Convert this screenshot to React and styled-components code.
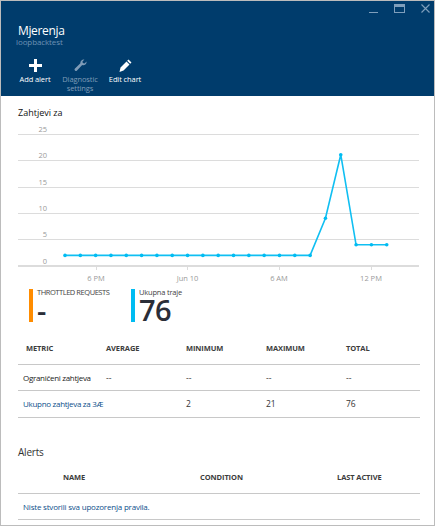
import React from "react";
import styled, { createGlobalStyle } from "styled-components";

const Global = createGlobalStyle`
  html, body { margin: 0; padding: 0; background: #fff; }
  body { font-family: "Open Sans", "Noto Sans", sans-serif; }
`;
const Frame = styled.div`
  box-sizing: border-box; width: 435px; height: 526px; overflow: hidden;
  border: 1px solid #bcbcbc; display: flex; flex-direction: column; background: #fff;
`;
const Header = styled.header`
  height: 95px; background: #003c6c; color: #fff; position: relative; flex: none;
  padding: 23px 0 0 17px; box-sizing: border-box;
`;
const Title = styled.h1`
  margin: 0; font-size: 12px; line-height: 13px; font-weight: 400; letter-spacing: -0.35px;
`;
const Subtitle = styled.div`
  font-size: 8px; line-height: 9px; color: #6d92b4; margin-left: -2px; letter-spacing: -0.1px;
`;
const Commands = styled.div` display: flex; margin-top: 13px; margin-left: -5.5px; `;
const Command = styled.div`
  width: 45px; display: flex; flex-direction: column; align-items: center;
  font-size: 7.5px; line-height: 9px; text-align: center; letter-spacing: -0.1px;
  color: ${p => (p.$off ? "#7f9cb8" : "#fff")};
  svg { display: block; margin-bottom: 3px; }
`;
const WindowButtons = styled.div`
  position: absolute; top: 3px; right: 4px; display: flex; gap: 16px; align-items: flex-start;
`;
const Body = styled.main` flex: 1; padding: 10px 15px 0 17px; `;
const ChartTitle = styled.h2`
  margin: 0; font-size: 9px; line-height: 13px; font-weight: 400; color: #111;
`;
const ChartSvg = styled.svg` display: block; margin-top: 6px; `;
const Legend = styled.div` display: flex; margin: 1px 0 0 11px; `;
const LegendItem = styled.div`
  width: 102px; height: 33px; box-sizing: border-box; border-left: 4px solid ${p => p.$c};
  padding-left: 4px;
`;
const LegendLabel = styled.div`
  font-size: 7.5px; line-height: 9px; margin-top: -1px; color: #444; white-space: nowrap;
  letter-spacing: ${p => (p.$tight ? "-0.45px" : "-0.2px")};
`;
const LegendValue = styled.div`
  font-size: 29px; line-height: 25px; font-weight: 600; color: #2b2e38; letter-spacing: -0.5px;
`;
const Grid = styled.div`
  display: grid; grid-template-columns: ${p => p.$cols};
  margin-top: ${p => p.$mt || 0}px;
`;
const Head = styled.div`
  font-size: 7.5px; font-weight: 700; color: #3c3c3c; height: 25px; line-height: 19px;
  border-bottom: 1px solid #c8c8c8; padding-left: ${p => p.$pl || 0}px; white-space: nowrap;
  letter-spacing: -0.1px;
`;
const Cell = styled.div`
  font-size: 8px; color: ${p => p.$c || "#333"}; height: ${p => p.$h || 25}px; line-height: 25px;
  border-bottom: 1px solid #c8c8c8; padding-left: ${p => p.$pl || 0}px; white-space: nowrap;
  letter-spacing: -0.3px;
`;
const Num = styled(Cell)` font-size: 8.5px; letter-spacing: 0; `;
const Wide = styled(Cell)` grid-column: 1 / -1; letter-spacing: -0.2px; `;
const SectionTitle = styled.h2`
  margin: 27px 0 0 0; font-size: 10px; line-height: 14px; font-weight: 400; color: #333;
  letter-spacing: -0.2px;
`;

const vals = [2,2,2,2,2,2,2,2,2,2,2,2,2,2,2,2,2,9,21,4,4,4];
const CX0 = 47, STEP = 15.32;
const points = vals.map((v, i) => [CX0 + i * STEP, 141 - 5.3 * v]);

const Chart = () => (
  <ChartSvg width="402" height="163" viewBox="0 0 402 163">
    {[9, 35, 62, 88, 114].map(y => (
      <line key={y} x1="0" x2="401" y1={y + 0.5} y2={y + 0.5} stroke="#dcdcdc" strokeWidth="1" />
    ))}
    <line x1="0" x2="401" y1="141" y2="141" stroke="#dcdcdc" strokeWidth="2" />
    {[["25", 7], ["20", 33], ["15", 60], ["10", 86], ["5", 112], ["0", 139]].map(([t, y]) => (
      <text key={t} x="29" y={y} textAnchor="end" fontSize="7.5" fill="#9a9a9a" fontFamily="Open Sans">{t}</text>
    ))}
    {[[78, "6 PM"], [169.5, "Jun 10"], [261, "6 AM"], [353, "12 PM"]].map(([x, t]) => (
      <g key={t}>
        <line x1={Math.floor(x) + 0.5} x2={Math.floor(x) + 0.5} y1="142" y2="145" stroke="#dcdcdc" />
        <text x={x} y="156" textAnchor="middle" fontSize="7.5" fill="#9a9a9a" fontFamily="Open Sans">{t}</text>
      </g>
    ))}
    <polyline points={points.map(p => p.join(",")).join(" ")} fill="none" stroke="#10bff2" strokeWidth="1.6" />
    {points.map(([x, y], i) => <circle key={i} cx={x} cy={y} r="1.8" fill="#00bcf2" />)}
  </ChartSvg>
);

export default function App() {
  return (
    <>
      <Global />
      <Frame>
        <Header>
          <Title>Mjerenja</Title>
          <Subtitle>loopbacktest</Subtitle>
          <Commands>
            <Command>
              <svg width="13" height="13" viewBox="0 0 13 13"><path d="M5 0h3v5h5v3H8v5H5V8H0V5h5z" fill="#fff" /></svg>
              Add alert
            </Command>
            <Command $off>
              <svg width="13" height="13" viewBox="0 0 13 13"><path d="M12.6 2.4a3.4 3.4 0 0 1-4.4 3.6L3 11.600a1.400 1.400 0 0 1-2-2l5.400-5.300A3.400 3.400 0 0 1 10.400.5L8.500 2.400l.3 1.700 1.700.3z" fill="#7f9cb8" /></svg>
              Diagnostic<br />settings
            </Command>
            <Command>
              <svg width="13" height="13" viewBox="0 0 13 13"><path d="M9.500.5l3 3-1.300 1.300-3-3zM7.500 2.500l3 3-6 6-4 1.500 1-4.500z" fill="#fff" /></svg>
              Edit chart
            </Command>
          </Commands>
          <WindowButtons>
            <svg width="11" height="11" viewBox="0 0 11 11"><rect x="2" y="8" width="9" height="1" fill="#7f9fbc" /></svg>
            <svg width="11" height="10" viewBox="0 0 11 10"><rect x="0.500" y="0.500" width="10" height="8" fill="none" stroke="#7f9fbc" /><rect x="1" y="1" width="9" height="2" fill="#7f9fbc" /></svg>
            <svg width="9" height="9" viewBox="0 0 9 9"><path d="M.5.5l8 8M8.500.5l-8 8" stroke="#7f9fbc" strokeWidth="1.100" fill="none" /></svg>
          </WindowButtons>
        </Header>
        <Body>
          <ChartTitle>Zahtjevi za</ChartTitle>
          <Chart />
          <Legend>
            <LegendItem $c="#ff8c00">
              <LegendLabel $tight>THROTTLED REQUESTS</LegendLabel>
              <LegendValue>-</LegendValue>
            </LegendItem>
            <LegendItem $c="#00bcf2">
              <LegendLabel>Ukupna traje</LegendLabel>
              <LegendValue>76</LegendValue>
            </LegendItem>
          </Legend>
          <Grid $cols="88px 80px 80px 80px 74px" $mt={17}>
            <Head $pl={8}>METRIC</Head><Head>AVERAGE</Head><Head>MINIMUM</Head><Head>MAXIMUM</Head><Head>TOTAL</Head>
            <Cell $pl={5} $c="#222">Ograničeni zahtjeva</Cell><Num>--</Num><Num>--</Num><Num>--</Num><Num>--</Num>
            <Cell $pl={5} $h={26} $c="#0d4f8b">Ukupno zahtjeva za 3Æ</Cell><Num $h={26}></Num><Num $h={26}>2</Num><Num $h={26}>21</Num><Num $h={26}>76</Num>
          </Grid>
          <SectionTitle>Alerts</SectionTitle>
          <Grid $cols="182px 137px 83px" $mt={9}>
            <Head $pl={45}>NAME</Head><Head>CONDITION</Head><Head>LAST ACTIVE</Head>
            <Wide $pl={5} $c="#0d4f8b">Niste stvorili sva upozorenja pravila.</Wide>
          </Grid>
        </Body>
      </Frame>
    </>
  );
}
